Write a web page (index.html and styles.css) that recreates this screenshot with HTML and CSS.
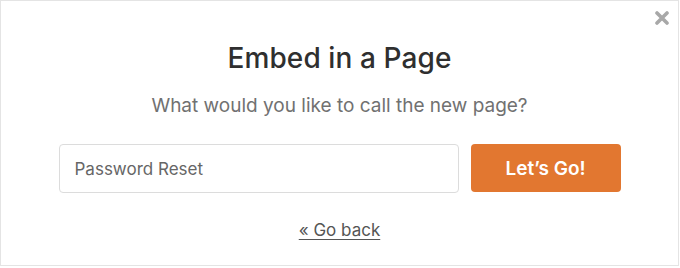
FILE: index.html
```html
<!DOCTYPE html>
<html>
<head>
<meta charset="utf-8">
<link rel="stylesheet" href="styles.css">
</head>
<body>
<div class="modal">
  <button class="close" aria-label="Close">
    <svg width="14" height="14" viewBox="0 0 14 14"><path d="M2 2 L12 12 M12 2 L2 12" stroke="#a8a8a8" stroke-width="3.6" stroke-linecap="round"/></svg>
  </button>
  <h1 class="title">Embed in a Page</h1>
  <p class="subtitle">What would you like to call the new page?</p>
  <div class="form-row">
    <input class="name-input" type="text" value="Password Reset">
    <button class="go">Let’s Go!</button>
  </div>
  <a class="back" href="#">« Go back</a>
</div>
</body>
</html>
```
FILE: styles.css
```css
html, body {
  margin: 0;
  padding: 0;
  background: #fff;
}
body {
  font-family: Inter, "Helvetica Neue", Arial, sans-serif;
}
.modal {
  position: relative;
  box-sizing: border-box;
  width: 679px;
  height: 266px;
  border: 1px solid #e4e4e4;
  display: flex;
  flex-direction: column;
  align-items: center;
  padding-top: 39px;
}
.close {
  position: absolute;
  top: 10px;
  right: 9px;
  background: none;
  border: 0;
  padding: 0;
  width: 14px;
  height: 14px;
  display: flex;
}
.title {
  margin: 0;
  font-size: 28px;
  line-height: 36px;
  font-weight: 500;
  color: #2f2f2f;
  letter-spacing: 0.1px;
}
.subtitle {
  margin: 17px 0 0;
  font-size: 19px;
  line-height: 26px;
  color: #717171;
}
.form-row {
  display: flex;
  gap: 12px;
  margin-top: 25px;
}
.name-input {
  box-sizing: border-box;
  width: 400px;
  height: 49px;
  border: 1px solid #dcdcdc;
  border-radius: 4px;
  padding: 0 15px;
  font-family: inherit;
  font-size: 17px;
  color: #666;
  outline: none;
}
.go {
  box-sizing: border-box;
  width: 150px;
  height: 48px;
  border: 0;
  border-radius: 4px;
  background: #e27730;
  color: #fff;
  font-family: inherit;
  font-size: 19px;
  font-weight: 600;
}
.back {
  margin-top: 26px;
  font-size: 17px;
  line-height: 22px;
  color: #555;
  text-decoration: underline;
  text-underline-offset: 3px;
}
```
